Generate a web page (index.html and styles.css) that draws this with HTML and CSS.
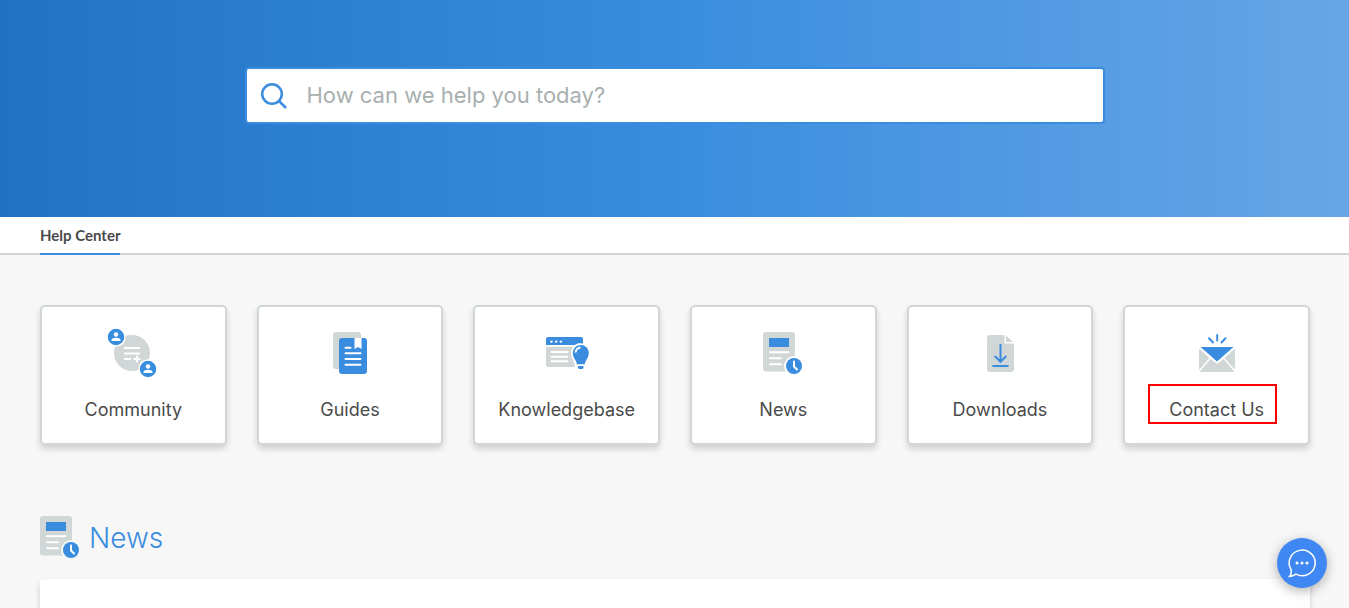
FILE: index.html
```html
<!DOCTYPE html>
<html lang="en">
<head>
<meta charset="utf-8">
<meta name="viewport" content="width=device-width, initial-scale=1">
<title>Help Center</title>
<link rel="stylesheet" href="styles.css">
</head>
<body>
<header class="hero">
  <form class="search" role="search">
    <svg class="search-icon" viewBox="0 0 28 28" aria-hidden="true"><circle cx="12" cy="12" r="9.8"/><path d="M19 19l7 7"/></svg>
    <input class="search-input" type="search" aria-label="Search" placeholder="How can we help you today?">
  </form>
</header>
<nav class="tabs"><a class="tab" href="#" aria-current="page">Help Center</a></nav>
<main class="content">
  <div class="cards">
    <a class="card" href="#">
      <svg class="card-icon" viewBox="0 0 54 54" aria-hidden="true">
        <circle class="grey" cx="26" cy="27" r="18"/>
        <path class="line" d="M18 22h16M18 27.500h16M18 33h7M27.500 33h7M31 29.500v7"/>
        <circle class="blue ring" cx="10" cy="11" r="9"/><circle class="white" cx="10" cy="8.500" r="2.200"/><path class="white" d="M5.500 15v-1c0-3 9-3 9 0v1z"/>
        <circle class="blue ring" cx="42" cy="43" r="9"/><circle class="white" cx="42" cy="40.500" r="2.200"/><path class="white" d="M37.500 47v-1c0-3 9-3 9 0v1z"/>
      </svg>
      <span>Community</span>
    </a>
    <a class="card" href="#">
      <svg class="card-icon" viewBox="0 0 54 54" aria-hidden="true">
        <rect class="grey" x="10" y="6" width="28" height="37" rx="3"/>
        <rect class="blue" x="16" y="12" width="28" height="36" rx="3"/>
        <path class="white" d="M31.500 12h7v11l-3.500-2-3.500 2z"/>
        <path class="line round" d="M22.500 21.700h5M22.500 27.300h15M22.500 33h15M22.500 38.700h15"/>
      </svg>
      <span>Guides</span>
    </a>
    <a class="card" href="#">
      <svg class="card-icon" viewBox="0 0 54 54" aria-hidden="true">
        <path class="blue" d="M6 19v-6a2 2 0 0 1 2-2h33a2 2 0 0 1 2 2v6z"/>
        <path class="grey" d="M6 20.700h37V41H8a2 2 0 0 1-2-2z"/>
        <path class="white" d="M35 41.500C35 35 31 33 31 27a9.500 9.500 0 0 1 12-9.500V41.500z"/>
        <circle class="white" cx="11.500" cy="15.600" r="1.200"/><circle class="white" cx="16.200" cy="15.600" r="1.200"/><circle class="white" cx="20.900" cy="15.600" r="1.200"/>
        <path class="line round" d="M11.500 26h16M11.500 30.700h16M11.500 35.300h16"/>
        <path class="blue" d="M36.800 38.200c0-3.500-4-6-4-11.200a8 8 0 0 1 16 0c0 5.200-4 7.700-4 11.200zM38 40h5.500v2l-1 1h-3.500l-1-1z"/>
        <path class="line" d="M35.500 26.500c.3-2.700 2-4.500 5-5"/>
      </svg>
      <span>Knowledgebase</span>
    </a>
    <a class="card" href="#">
      <svg class="card-icon" viewBox="0 0 54 54" aria-hidden="true">
        <rect class="grey" x="7" y="6" width="32" height="39.500" rx="3"/>
        <path class="blue" d="M13 12h20v9H13z"/>
        <path class="line round" d="M14 26.300h18.500M14 32.300h11M14 38.300h11"/>
        <circle class="white" cx="38" cy="40" r="10"/><circle class="blue" cx="38" cy="40" r="8"/><path class="line round" d="M38 35.500v5l3 3"/>
      </svg>
      <span>News</span>
    </a>
    <a class="card" href="#">
      <svg class="card-icon" viewBox="0 0 54 54" aria-hidden="true">
        <path class="grey" d="M17 9h14.500v8.500H41V43a3 3 0 0 1-3 3H17a3 3 0 0 1-3-3V12a3 3 0 0 1 3-3zM33 9.500l7 6.500h-7z"/>
        <path class="stroke" d="M27.500 18v17.500M21.700 30l5.800 5.800L33.300 30M19.500 40h16"/>
      </svg>
      <span>Downloads</span>
    </a>
    <a class="card" href="#">
      <svg class="card-icon" viewBox="0 0 54 54" aria-hidden="true">
        <path class="grey" d="M9 22.500L19.500 32 9 44zM45 22.500L34.500 32 45 44zM20.500 33l6.500 5 6.500-5L44.500 46h-35z"/>
        <path class="blue" d="M10.500 21h33L27 35.500z"/>
        <path class="stroke ray" d="M27.200 9v5.500M19 12.300l4 4.200M35.500 12.300l-4 4.200"/>
      </svg>
      <span>Contact Us</span>
      <span class="highlight"></span>
    </a>
  </div>
  <section class="news">
    <h2 class="news-title">
      <svg class="news-icon" viewBox="0 0 40 44" aria-hidden="true">
        <rect class="grey" x="0" y="0" width="32" height="39.500" rx="3"/>
        <path class="blue" d="M6 6h20v9H6z"/>
        <path class="line round" d="M7 20.300h18.500M7 26.300h11M7 32.300h11"/>
        <circle class="page" cx="31" cy="34" r="10"/><circle class="blue" cx="31" cy="34" r="8"/><path class="line round" d="M31 29.500v5l3 3"/>
      </svg>
      News
    </h2>
    <div class="panel"></div>
  </section>
</main>
<button class="chat" type="button" aria-label="Open chat">
  <svg class="chat-icon" viewBox="0 0 30 30" aria-hidden="true"><path class="bubble" d="M4 21.500A13 12.800 0 1 1 9 26.200Q6 28.500 2.500 28.500Q5 25.500 4 21.500z"/><circle class="white" cx="10" cy="15" r="1.500"/><circle class="white" cx="15" cy="15" r="1.500"/><circle class="white" cx="20" cy="15" r="1.500"/></svg>
</button>
</body>
</html>
```
FILE: styles.css
```css
* { box-sizing: border-box; }
body {
  margin: 0;
  min-height: 100vh;
  display: flex;
  flex-direction: column;
  background: #f7f7f7;
  color: #4a4a4a;
  font-family: Inter, Roboto, sans-serif;
}
.hero {
  padding: 67px 40px 93px;
  background: linear-gradient(90deg, #2172c4 0%, #3a8dde 50%, #66a6e6 100%);
}
.search {
  display: flex;
  align-items: center;
  gap: 19px;
  max-width: 860px;
  height: 57px;
  margin: 0 auto;
  padding: 0 13px;
  background: #fff;
  border: 2px solid #3a8dde;
  border-radius: 4px;
}
.search-icon { flex: none; width: 28px; height: 28px; fill: none; stroke: #3a8dde; stroke-width: 2.5; }
.search-input {
  flex: 1;
  min-width: 0;
  padding: 0 0 2px;
  border: 0;
  outline: 0;
  background: none;
  color: #4a4a4a;
  font: 22px Inter, Roboto, sans-serif;
}
.search-input::placeholder { color: #a8afaf; opacity: 1; }
.tabs {
  display: flex;
  padding: 0 40px;
  background: #fff;
  box-shadow: inset 0 -2px #d1d6d6;
}
.tab {
  height: 38px;
  border-bottom: 2px solid #3a8dde;
  color: #4a4a4a;
  font: bold 15px/37px Lato, sans-serif;
  text-decoration: none;
}
.content { flex: 1; display: flex; flex-direction: column; padding: 50px 39px 0 40px; }
.cards { display: grid; grid-template-columns: repeat(6, 1fr); gap: 30px; }
.card {
  position: relative;
  display: flex;
  flex-direction: column;
  align-items: center;
  gap: 17px;
  padding: 19px 0 20px;
  background: #fff;
  border: 2px solid #d1d6d6;
  border-radius: 5px;
  box-shadow: 0 4px 6px rgba(0, 0, 0, .16);
  color: #4a4a4a;
  font-size: 18px;
  line-height: 26px;
  text-decoration: none;
}
.card-icon { width: 54px; height: 54px; }
.grey { fill: #d1d6d6; }
.blue { fill: #3a8dde; }
.white { fill: #fff; }
.page { fill: #f7f7f7; }
.ring { stroke: #fff; stroke-width: 1.5; }
.line { fill: none; stroke: #fff; stroke-width: 2; }
.round { stroke-linecap: round; }
.stroke { fill: none; stroke: #3a8dde; stroke-width: 2; }
.ray { stroke-linecap: round; }
.highlight { position: absolute; top: 77px; right: 31px; bottom: 19px; left: 23px; border: 2px solid #f00; }
.news { flex: 1; display: flex; flex-direction: column; padding-top: 71px; }
.news-title {
  display: flex;
  align-items: center;
  gap: 9px;
  margin: 0 0 19px;
  color: #3a8dde;
  font-size: 28px;
  font-weight: 300;
  line-height: 42px;
}
.news-icon { width: 40px; height: 44px; }
.panel { flex: 1; min-height: 29px; background: #fff; border-radius: 4px 4px 0 0; box-shadow: 0 4px 6px rgba(0, 0, 0, .16); }
.chat {
  position: fixed;
  right: 22px;
  bottom: 20px;
  display: grid;
  place-items: center;
  width: 50px;
  height: 50px;
  padding: 0;
  border: 0;
  border-radius: 50%;
  background: #3f88f3;
  box-shadow: 0 3px 12px rgba(0, 0, 0, .3);
}
.chat-icon { width: 30px; height: 30px; }
.bubble { fill: none; stroke: #fff; stroke-width: 1.5; }
```
